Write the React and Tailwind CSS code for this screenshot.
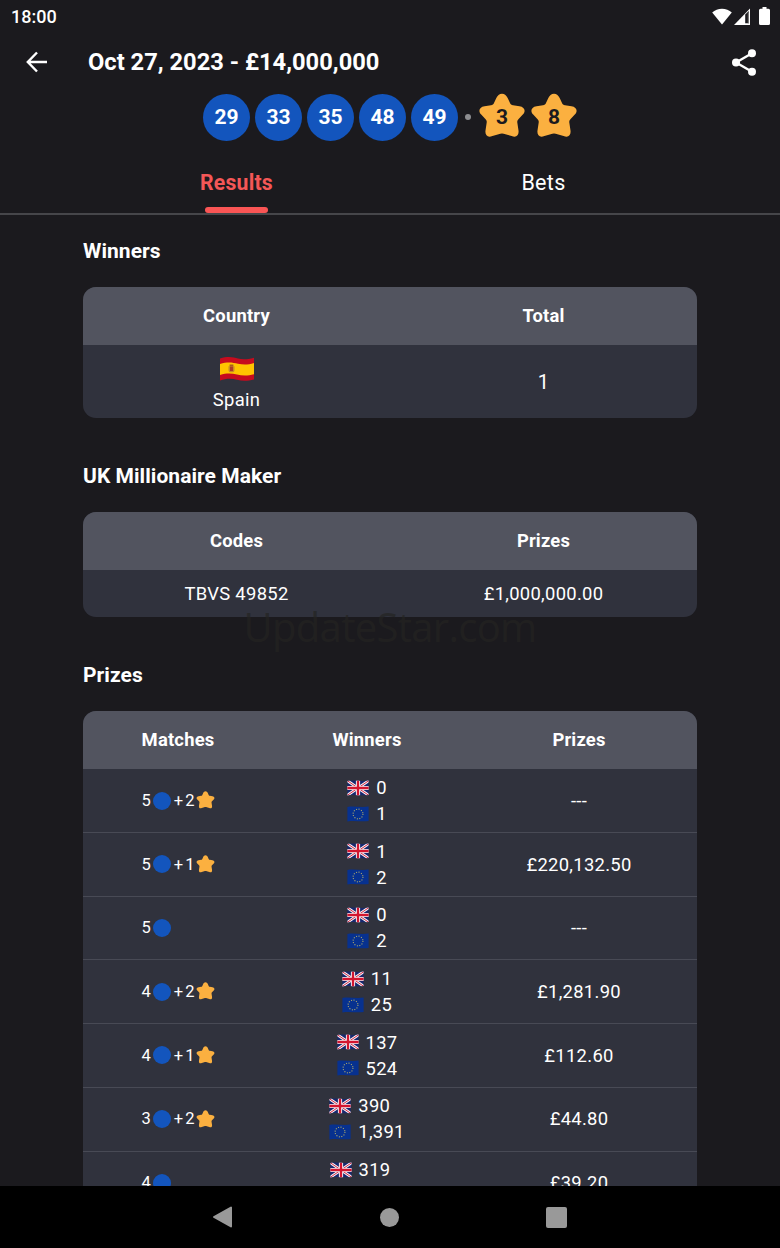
import React from "react";

const balls = [29, 33, 35, 48, 49];
const stars = [3, 8];

const rows = [
  { numbers: 5, stars: 2, uk: "0", eu: "1", prize: "---" },
  { numbers: 5, stars: 1, uk: "1", eu: "2", prize: "£220,132.50" },
  { numbers: 5, stars: 0, uk: "0", eu: "2", prize: "---" },
  { numbers: 4, stars: 2, uk: "11", eu: "25", prize: "£1,281.90" },
  { numbers: 4, stars: 1, uk: "137", eu: "524", prize: "£112.60" },
  { numbers: 3, stars: 2, uk: "390", eu: "1,391", prize: "£44.80" },
  { numbers: 4, stars: 0, uk: "319", eu: "", prize: "£39.20" },
];

const Star = ({ className }) => (
  <svg viewBox="0 0 48 48" className={className} fill="#fbb040">
    <path d="M24 .7C26.6 .7 28.6 2.6 29.8 5.2L32 10C32.6 11.4 33.5 12.1 35 12.3L41.5 13.2C46.6 14 48.2 18 44.8 21.6L40.4 26.2C39.4 27.2 39.1 28.2 39.3 29.6L40.5 37.5C41.2 42.6 38 45.2 33.6 43L27.4 41.2C25 40.4 23 40.4 20.6 41.2L14.4 43C10 45.2 6.8 42.6 7.5 37.5L8.7 29.6C8.9 28.2 8.6 27.2 7.6 26.2L3.2 21.6C-.2 18 1.4 14 6.5 13.2L13 12.3C14.5 12.1 15.4 11.4 16 10L18.2 5.2C19.4 2.6 21.4 .7 24 .7Z" />
  </svg>
);

const SpainFlag = () => (
  <svg viewBox="0 0 34 24" className="ml-px h-6 w-[34px]">
    <path d="M0 1.5C9-1.2 14 .6 18 1.6S27 2.8 34 .8V22.4C28 24.2 22 24.2 17 22.8S7 21 0 23.4Z" fill="#c60b1e" />
    <path d="M0 7C8 4.6 13 5.8 18 6.8S28 8 34 6V17.2C28 19 22 18.8 17 17.6S7 15.8 0 18Z" fill="#ffc400" />
    <path d="M8.5 9.2h6v4.2c0 2.6-6 2.6-6 0Z" fill="#c88a24" />
    <path d="M10 9.4h3v4.6h-3Z" fill="#ad3b2a" />
    <path d="M9.6 7.6h3.8v1.6H9.6Z" fill="#a85a20" />
  </svg>
);

const UkFlag = () => (
  <svg viewBox="0 0 22 16" className="h-4 w-[22px]">
    <clipPath id="uk">
      <path d="M.4 1C7-.2 14 1.8 21.6.6V15C15 16 8 14.4.4 15.4Z" />
    </clipPath>
    <g clipPath="url(#uk)">
      <path d="M0 0h22v16H0Z" fill="#17286f" />
      <path d="M0 .5 22 15.5M22 .5 0 15.5" stroke="#f3f0f6" strokeWidth="2.8" />
      <path d="M0 .5 22 15.5M22 .5 0 15.5" stroke="#d3152f" strokeWidth=".9" />
      <path d="M11 0v16M0 8h22" stroke="#f3f0f6" strokeWidth="4.2" />
      <path d="M11 0v16M0 8h22" stroke="#d3152f" strokeWidth="2.3" />
    </g>
  </svg>
);

const EuFlag = () => (
  <svg viewBox="0 0 22 16" className="h-4 w-[22px]">
    <path d="M.4 1C7-.2 14 1.8 21.6.6V15C15 16 8 14.4.4 15.4Z" fill="#07318f" />
    <circle cx="11" cy="8" r="4.9" fill="none" stroke="#b9b168" strokeWidth="1.1" strokeDasharray="1 1.565" />
  </svg>
);

const Card = ({ children }) => (
  <div className="overflow-hidden rounded-[13px] bg-[#30323d]">{children}</div>
);

const Title = ({ children }) => (
  <h2 className="h-8 text-[21px] leading-8 font-bold tracking-[0.05px]">{children}</h2>
);

const App = () => {
  return (
    <div className="relative flex h-[1248px] w-[780px] flex-col overflow-hidden bg-[#1b1a1e] font-['Roboto',sans-serif] text-white">
      <header className="flex h-8 shrink-0 items-center justify-between pr-[10px] pl-[11px]">
        <span className="text-[18px] font-medium">18:00</span>
        <div className="flex items-center">
          <svg viewBox="0 0 20 17" className="h-[17px] w-5" fill="#fff">
            <path d="M10 16.5.2 4.6C5.2-.7 14.8-.7 19.8 4.6Z" />
          </svg>
          <svg viewBox="0 0 16 17" className="ml-[2px] h-[17px] w-4">
            <path d="M16 .5V17H0Z" fill="#fff" />
            <path d="M11.2 6.5 14.8 3V15.2H11.2Z" fill="#1b1a1e" />
            <path d="M13.8 4.5H15v10.7h-1.2Z" fill="#777" />
          </svg>
          <svg viewBox="0 0 11 18" className="ml-[9px] h-[18px] w-[11px]" fill="#fff">
            <path d="M3.5 0h4v1.8H9.5Q11 1.8 11 3.3V16.5Q11 18 9.5 18h-8Q0 18 0 16.5V3.3Q0 1.8 1.5 1.8h2Z" />
          </svg>
        </div>
      </header>

      <div className="mb-px flex h-[60px] shrink-0 items-center pr-6 pl-[26px]">
        <svg viewBox="0 0 22 22" className="h-[22px] w-[22px]" fill="none" stroke="#fff" strokeWidth="2.4">
          <path d="M11 1.5 1.8 11 11 20.5M2 11h19" />
        </svg>
        <h1 className="ml-10 text-[23.7px] leading-9 font-bold">Oct 27, 2023 - £14,000,000</h1>
        <svg viewBox="0 0 24 27" className="ml-auto h-[27px] w-6" fill="#fff">
          <path d="M4 13.5 20 4.3M4 13.5 20 22.7" stroke="#fff" strokeWidth="2.4" />
          <circle cx="4" cy="13.5" r="4" />
          <circle cx="20" cy="4.3" r="4" />
          <circle cx="20" cy="22.7" r="4" />
        </svg>
      </div>

      <div className="flex h-12 shrink-0 items-center pl-[203px] text-[21px] font-bold">
        <div className="flex gap-[5px]">
          {balls.map((n) => (
            <div key={n} className="flex h-[47px] w-[47px] items-center justify-center rounded-full bg-[#1355bd] pt-[2px]">
              {n}
            </div>
          ))}
        </div>
        <div className="mr-[7px] ml-[7px] h-[6px] w-[6px] rounded-full bg-[#8d8d90]" />
        <div className="flex gap-1 text-[#1b1a1e]">
          {stars.map((n) => (
            <div key={n} className="grid place-items-center">
              <Star className="col-start-1 row-start-1 h-12 w-12" />
              <span className="col-start-1 row-start-1 pt-[2px]">{n}</span>
            </div>
          ))}
        </div>
      </div>

      <nav className="flex h-[74px] shrink-0 justify-center border-b-2 border-[#46464a] text-[21.5px] tracking-[0.3px]">
        <div className="flex w-[307px] flex-col items-center justify-between pt-[26px] font-bold text-[#f45757]">
          <span className="text-[21.2px] tracking-[0.2px]">Results</span>
          <div className="h-[6px] w-[63px] rounded-[3px] bg-[#fa5555]" />
        </div>
        <div className="flex w-[307px] justify-center pt-[26px]">Bets</div>
      </nav>

      <main className="min-h-0 flex-1 overflow-hidden px-[83px] pt-5">
        <Title>Winners</Title>
        <div className="mt-5">
          <Card>
            <div className="grid h-[58px] grid-cols-2 place-items-center bg-[#52545f] pb-px text-[18.4px] font-bold tracking-[0.2px]">
              <span>Country</span>
              <span>Total</span>
            </div>
            <div className="grid h-[73px] grid-cols-2 place-items-center text-[18.4px] tracking-[0.3px]">
              <div className="flex flex-col items-center pt-[7px]">
                <SpainFlag />
                <span className="mt-[5px]">Spain</span>
              </div>
              <span className="pt-px text-[20px]">1</span>
            </div>
          </Card>
        </div>

        <div className="mt-[42px]">
          <Title>UK Millionaire Maker</Title>
        </div>
        <div className="mt-5">
          <Card>
            <div className="grid h-[58px] grid-cols-2 place-items-center bg-[#52545f] pb-px text-[18.4px] font-bold tracking-[0.2px]">
              <span>Codes</span>
              <span>Prizes</span>
            </div>
            <div className="grid h-[47px] grid-cols-2 place-items-center text-[18.4px] tracking-[0.3px]">
              <span>TBVS 49852</span>
              <span>£1,000,000.00</span>
            </div>
          </Card>
        </div>

        <div className="mt-[42px]">
          <Title>Prizes</Title>
        </div>
        <div className="mt-5">
          <Card>
            <div className="grid h-[58.4px] grid-cols-[190px_188px_236px] place-items-center bg-[#52545f] pb-px text-[18.4px] font-bold tracking-[0.2px]">
              <span>Matches</span>
              <span>Winners</span>
              <span>Prizes</span>
            </div>
            {rows.map((row, i) => (
              <div
                key={i}
                className="grid h-[63.7px] grid-cols-[190px_188px_236px] items-center border-b border-[#484a55] text-[18.4px] tracking-[0.3px]"
              >
                <div className="flex items-center pl-[58.5px] text-[16.5px] tracking-normal">
                  <span className="pt-px">{row.numbers}</span>
                  <span className="ml-[2px] h-[18px] w-[18px] rounded-full bg-[#1355bd]" />
                  {row.stars > 0 && (
                    <>
                      <span className="ml-[3px] pt-px">+</span>
                      <span className="ml-[2px] pt-px">{row.stars}</span>
                      <Star className="ml-[2px] h-[19px] w-[19px]" />
                    </>
                  )}
                </div>
                <div className="flex flex-col justify-self-center">
                  <div className="flex h-[26px] items-center gap-[7px]">
                    <UkFlag />
                    {row.uk}
                  </div>
                  <div className="flex h-[26px] items-center gap-[7px]">
                    <EuFlag />
                    {row.eu || <span className="w-[46px]" />}
                  </div>
                </div>
                <span className="justify-self-center">{row.prize}</span>
              </div>
            ))}
          </Card>
        </div>
      </main>

      <footer className="flex h-[62px] shrink-0 items-center justify-between bg-black pr-[213px] pl-[212px]">
        <svg viewBox="0 0 21 22" className="h-[22px] w-[21px]" fill="#999" stroke="#999" strokeWidth="2" strokeLinejoin="round">
          <path d="M19 1.5v19L2 11Z" />
        </svg>
        <div className="h-[19px] w-[19px] rounded-full bg-[#999]" />
        <div className="h-[21px] w-[21px] rounded-[2px] bg-[#999]" />
      </footer>

      {/* watermark */}
      <div className="pointer-events-none absolute inset-x-0 top-[600px] text-center font-['Open_Sans',sans-serif] text-[40px] leading-[54px] tracking-[-0.7px] text-[#242422]/70">
        UpdateStar.com
      </div>
    </div>
  );
};

export default App;
